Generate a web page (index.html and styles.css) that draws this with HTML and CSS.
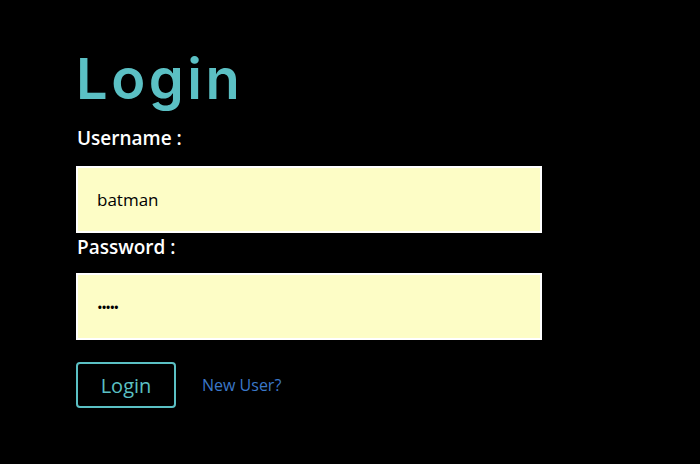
FILE: index.html
```html
<!DOCTYPE html>
<html>
<head>
<meta charset="utf-8">
<link rel="stylesheet" href="styles.css">
</head>
<body>
<form class="login">
  <h1 class="title">Login</h1>
  <label class="label">Username :</label>
  <div class="field">batman</div>
  <label class="label">Password :</label>
  <div class="field field-pass">•••••</div>
  <div class="actions">
    <button type="button" class="btn">Login</button>
    <a class="link">New User?</a>
  </div>
</form>
</body>
</html>
```
FILE: styles.css
```css
html, body {
  margin: 0;
  background: #000;
  height: 100%;
}
body {
  font-family: "Open Sans", "Noto Sans", sans-serif;
}
.login {
  display: flex;
  flex-direction: column;
  align-items: flex-start;
  padding: 44px 0 0 76px;
  width: 466px;
}
.title {
  margin: 0 0 12px 0;
  color: #5bc0c4;
  font-family: "Inter", "Noto Sans", sans-serif;
  font-weight: 600;
  font-size: 56px;
  line-height: 70px;
  letter-spacing: 3.5px;
}
.label {
  color: #fff;
  font-size: 19px;
  font-weight: 600;
  line-height: 24px;
  padding-left: 1px;
}
.field {
  box-sizing: border-box;
  width: 466px;
  height: 67px;
  border: 2px solid #fff;
  background: #fdfdc6;
  color: #000;
  font-size: 17px;
  padding-left: 19px;
  display: flex;
  align-items: center;
  margin-top: 16px;
}
.field + .label { margin-top: 2px; }
.field-pass {
  font-size: 15px;
  letter-spacing: -1.5px;
  margin-top: 14px;
}
.actions {
  display: flex;
  align-items: center;
  gap: 26px;
  margin-top: 22px;
}
.btn {
  box-sizing: border-box;
  width: 100px;
  height: 46px;
  background: transparent;
  border: 2px solid #5bc0c4;
  border-radius: 4px;
  color: #5bc0c4;
  font-family: "Open Sans", "Noto Sans", sans-serif;
  font-size: 20px;
  padding: 0;
}
.link {
  color: #3b78c9;
  font-size: 16px;
}
```
